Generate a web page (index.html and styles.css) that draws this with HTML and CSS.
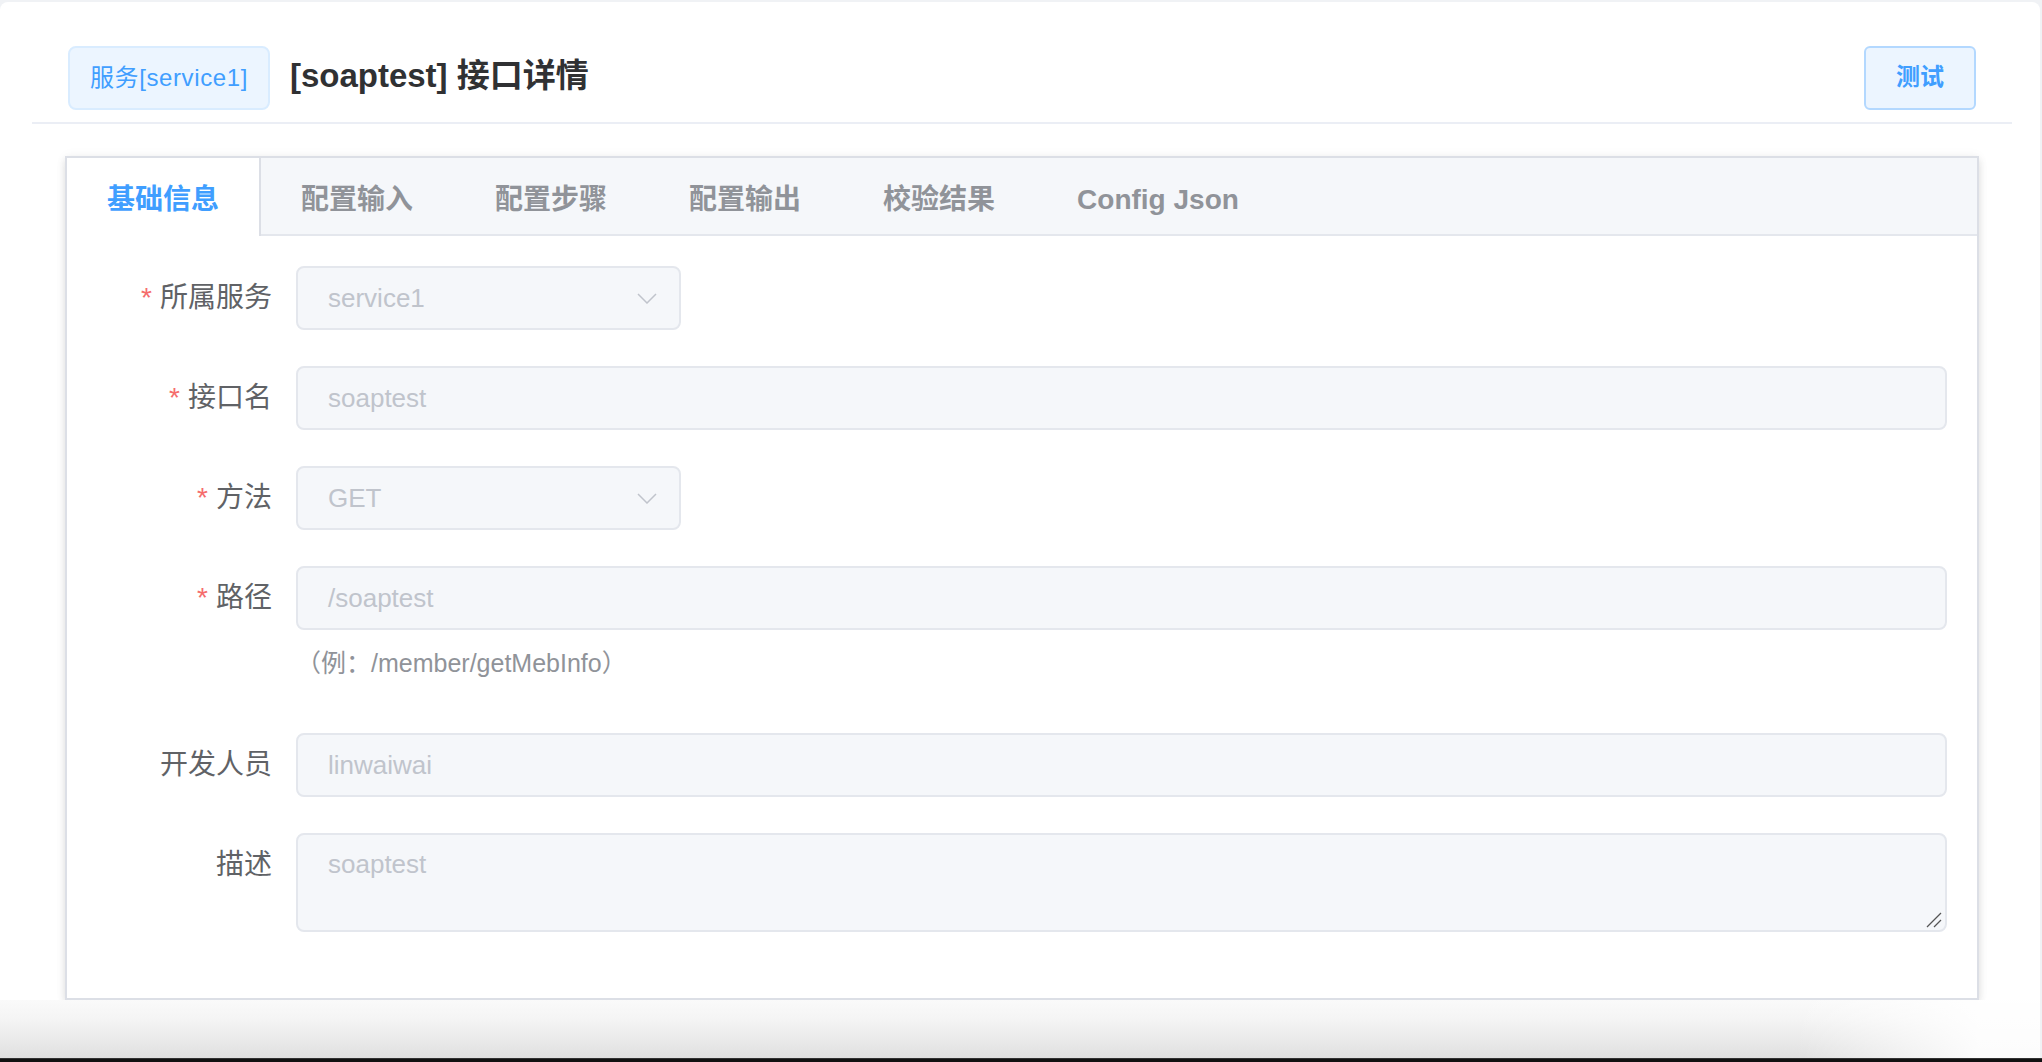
FILE: index.html
```html
<!DOCTYPE html>
<html lang="zh-CN">
<head>
<meta charset="utf-8">
<title>接口详情</title>
<link rel="stylesheet" href="styles.css">
</head>
<body>
<div class="app">
  <div class="header">
    <span class="tag">服务[service1]</span>
    <h1 class="title">[soaptest] 接口详情</h1>
    <div class="spacer"></div>
    <button class="btn">测试</button>
  </div>

  <div class="card">
    <div class="tabs-header">
      <div class="tab active">基础信息</div>
      <div class="tab">配置输入</div>
      <div class="tab">配置步骤</div>
      <div class="tab">配置输出</div>
      <div class="tab">校验结果</div>
      <div class="tab">Config Json</div>
    </div>
    <div class="tab-content">
      <div class="form-item">
        <label class="label"><span class="req">*</span>所属服务</label>
        <div class="control">
          <div class="input select"><span>service1</span>
            <svg class="chev" width="20" height="11" viewBox="0 0 20 11"><polyline points="1,1 10,10 19,1" fill="none" stroke="#c0c4cc" stroke-width="1.5"/></svg>
          </div>
        </div>
      </div>
      <div class="form-item">
        <label class="label"><span class="req">*</span>接口名</label>
        <div class="control"><div class="input">soaptest</div></div>
      </div>
      <div class="form-item">
        <label class="label"><span class="req">*</span>方法</label>
        <div class="control">
          <div class="input select"><span>GET</span>
            <svg class="chev" width="20" height="11" viewBox="0 0 20 11"><polyline points="1,1 10,10 19,1" fill="none" stroke="#c0c4cc" stroke-width="1.5"/></svg>
          </div>
        </div>
      </div>
      <div class="form-item">
        <label class="label"><span class="req">*</span>路径</label>
        <div class="control">
          <div class="input">/soaptest</div>
          <div class="hint">（例：/member/getMebInfo）</div>
        </div>
      </div>
      <div class="form-item">
        <label class="label">开发人员</label>
        <div class="control"><div class="input">linwaiwai</div></div>
      </div>
      <div class="form-item">
        <label class="label">描述</label>
        <div class="control">
          <div class="textarea">soaptest
            <svg class="grip" width="16" height="16" viewBox="0 0 16 16"><line x1="1" y1="15" x2="15" y2="1" stroke="#555" stroke-width="1.3"/><line x1="8" y1="15" x2="15" y2="8" stroke="#555" stroke-width="1.3"/></svg>
          </div>
        </div>
      </div>
    </div>
  </div>

  <div class="shade"></div>
</div>
<div class="bar"></div>
</body>
</html>
```

FILE: styles.css
```css
* { box-sizing: border-box; }

html, body {
  margin: 0;
  padding: 0;
}

body {
  width: 2042px;
  height: 1062px;
  overflow: hidden;
  background: #f0f2f5;
  display: flex;
  flex-direction: column;
  font-family: "Liberation Sans", "Noto Sans CJK SC", sans-serif;
  color: #606266;
}

.app {
  flex: 1;
  margin: 2px 2px 0 0;
  background: #fff;
  border-radius: 8px 8px 0 0;
  display: flex;
  flex-direction: column;
}

.header {
  margin: 0 28px 0 32px;
  padding: 44px 36px 12px 36px;
  border-bottom: 2px solid #ebeef5;
  display: flex;
  align-items: center;
}

.tag {
  height: 64px;
  line-height: 60px;
  padding: 0 20px;
  border: 2px solid #d9ecff;
  border-radius: 8px;
  background: #ecf5ff;
  color: #409eff;
  font-size: 24px;
  letter-spacing: 0.6px;
  white-space: nowrap;
}

.title {
  margin: 0 0 0 20px;
  padding-bottom: 10px;
  font-size: 33px;
  font-weight: bold;
  color: #303133;
}

.spacer { flex: 1; }

.btn {
  height: 64px;
  padding: 0 30px 8px;
  border: 2px solid #b3d8ff;
  border-radius: 6px;
  background: #ecf5ff;
  color: #409eff;
  font-family: inherit;
  font-size: 24px;
  font-weight: 600;
}

.card {
  margin: 32px 61px 0 65px;
  border: 2px solid #dcdfe6;
  background: #fff;
  box-shadow: 0 4px 8px 0 rgba(0, 0, 0, .12), 0 0 12px 0 rgba(0, 0, 0, .04);
}

.tabs-header {
  display: flex;
  height: 78px;
  background: #f5f7fa;
  border-bottom: 2px solid #e4e7ed;
}

.tab {
  height: 76px;
  line-height: 76px;
  padding: 4px 40px 0;
  margin-left: -2px;
  border-left: 2px solid transparent;
  border-right: 2px solid transparent;
  font-size: 28px;
  font-weight: 600;
  color: #909399;
  white-space: nowrap;
  overflow: hidden;
}

.tab.active {
  height: 78px;
  background: #fff;
  color: #409eff;
  border-left-color: #dcdfe6;
  border-right-color: #dcdfe6;
}

.tab-content {
  padding: 30px;
}

.form-item {
  display: flex;
  margin-bottom: 36px;
}

.label {
  flex: 0 0 199px;
  padding-right: 24px;
  text-align: right;
  font-size: 28px;
  line-height: 64px;
  color: #606266;
}

.req {
  color: #f56c6c;
  margin-right: 8px;
}

.control {
  flex: 1;
}

.input {
  height: 64px;
  line-height: 60px;
  padding: 0 30px;
  border: 2px solid #e4e7ed;
  border-radius: 8px;
  background: #f5f7fa;
  color: #c0c4cc;
  font-size: 26px;
}

.select {
  width: 385px;
  display: flex;
  align-items: center;
  justify-content: space-between;
  padding-right: 22px;
}

.chev { display: block; }

.hint {
  height: 67px;
  line-height: 67px;
  font-size: 25px;
  color: #909399;
}

.textarea {
  position: relative;
  height: 99px;
  padding: 10px 30px;
  line-height: 39px;
  border: 2px solid #e4e7ed;
  border-radius: 8px;
  background: #f5f7fa;
  color: #c0c4cc;
  font-size: 26px;
}

.grip {
  position: absolute;
  right: 3px;
  bottom: 2px;
}

.shade {
  flex: 1;
  background:
    linear-gradient(to right, rgba(255,255,255,0) 88%, rgba(255,255,255,.9) 97%),
    linear-gradient(to bottom, #fafafa 0%, #f4f4f4 35%, #e0e0e0 100%);
}

.bar {
  height: 4px;
  background: #111;
  border-top: 1px solid #333;
}
```
